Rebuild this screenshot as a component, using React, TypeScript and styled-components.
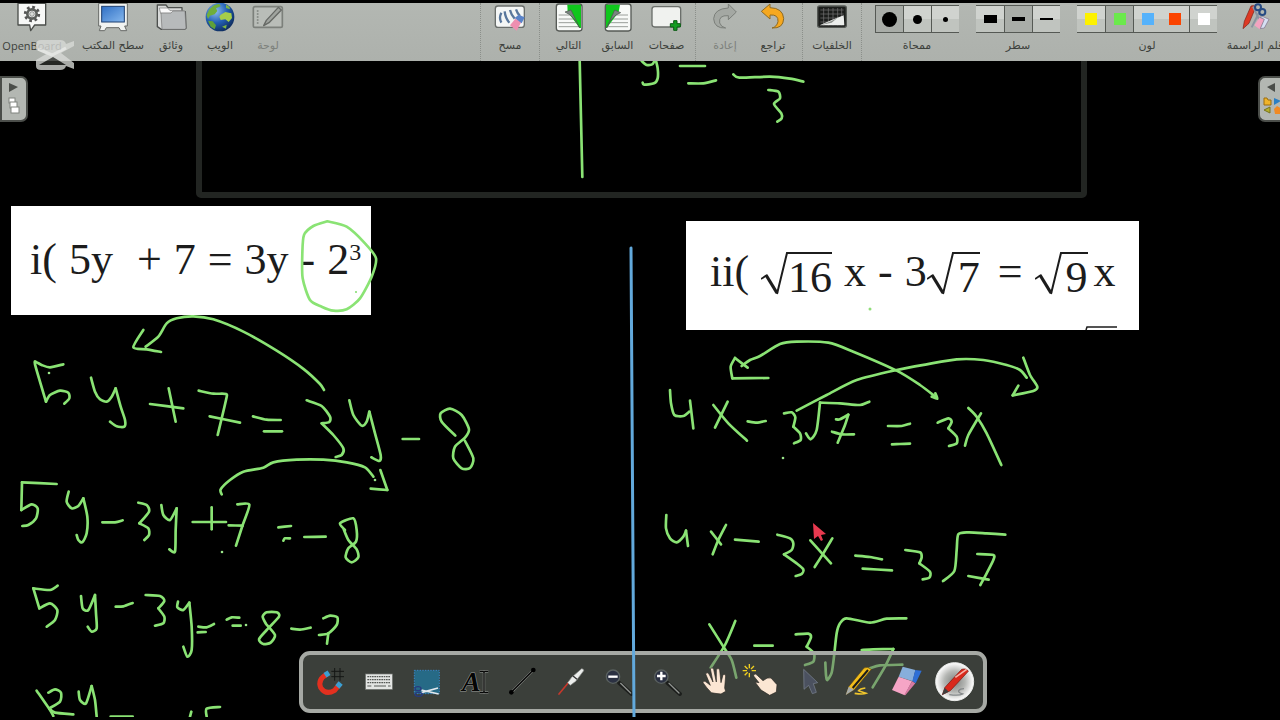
import React from 'react';
import styled, { createGlobalStyle, css } from 'styled-components';

const GlobalStyle = createGlobalStyle`
  *, *::before, *::after { box-sizing: border-box; }
  body { margin: 0; background: #000; }
  button { font: inherit; color: inherit; background: none; border: 0; padding: 0; cursor: pointer; }
`;

const Page = styled.div`
  display: grid;
  grid-template-columns: minmax(0, 1fr);
  min-height: 100vh;
  padding-bottom: 3px;
  overflow: hidden;
  background: #000;
  font-family: 'DejaVu Sans', 'Noto Sans', sans-serif;
`;

/* ---------- top toolbar ---------- */

const Toolbar = styled.header`
  grid-area: 1 / 1;
  align-self: start;
  z-index: 2;
  display: flex;
  height: 61px;
  border-top: 3px solid #000;
  background: linear-gradient(#b3b7b2, #adb1ac);
  color: #3c3f3b;
  overflow: hidden;
`;

const Section = styled.div<{ $pad?: number; $line?: boolean; $end?: boolean }>`
  display: flex;
  flex: none;
  padding: 0 ${p => p.$pad ?? 0}px;
  ${p => p.$line && css`border-left: 1px dotted #8b8f8a;`}
  ${p => p.$end && css`margin-left: auto;`}
`;

const PenSection = styled(Section)`
  padding: 0 0 0 13px;
`;

const Tool = styled.button<{ $width: number; $space?: number }>`
  flex: none;
  display: flex;
  flex-direction: column;
  align-items: center;
  gap: 3px;
  width: ${p => p.$width}px;
  margin-right: ${p => p.$space ?? 0}px;
  &:disabled { color: #7d817c; cursor: default; }
`;

const Label = styled.span<{ $latin?: boolean }>`
  font-family: ${p => (p.$latin ? "'Open Sans', 'Noto Sans'" : "'DejaVu Sans'")}, sans-serif;
  font-size: 11px;
  line-height: 20px;
  white-space: nowrap;
`;

const ToolIcon = styled.svg`
  flex: none;
  width: 32px;
  height: 30px;
  overflow: visible;
`;

const Choice = styled.div<{ $gap: number }>`
  flex: none;
  display: flex;
  flex-direction: column;
  align-items: center;
  gap: 3px;
  margin-right: ${p => p.$gap}px;
  padding-top: 2px;
`;

const Segments = styled.div`
  display: flex;
  height: 28px;
  border: solid #555954;
  border-width: 1px 0;
`;

const Segment = styled.button<{ $on?: boolean; $edge?: boolean }>`
  display: flex;
  align-items: center;
  justify-content: center;
  width: 28px;
  background: ${p => (p.$on ? '#a9ada8' : 'linear-gradient(#d0d3cf 50%, #c0c4bf 50%)')};
  ${p => p.$edge && css`border-left: 1px solid #555954;`}
`;

const Mark = styled.span<{ $w: number; $h: number; $color?: string; $round?: boolean }>`
  width: ${p => p.$w}px;
  height: ${p => p.$h}px;
  background: ${p => p.$color ?? '#000'};
  border-radius: ${p => (p.$round ? '50%' : '0')};
`;

/* ---------- board ---------- */

const Board = styled.main`
  grid-area: 1 / 1;
  position: relative;
  overflow: hidden;
`;

const Frame = styled.div`
  position: absolute;
  left: 196px;
  top: 20px;
  width: 891px;
  height: 178px;
  border: 6px solid #222522;
  border-radius: 5px;
`;

const Card = styled.section<{ $x: number; $y: number; $w: number; $pad: string }>`
  position: absolute;
  left: ${p => p.$x}px;
  top: ${p => p.$y}px;
  width: ${p => p.$w}px;
  height: 109px;
  padding: ${p => p.$pad};
  display: flex;
  align-items: flex-start;
  background: #fff;
  color: #1c1c1c;
  font: 44px/44px 'Liberation Serif', serif;
  white-space: nowrap;
`;

const Term = styled.span<{ $gap?: number }>`
  display: flex;
  align-items: flex-start;
  margin-left: ${p => p.$gap ?? 0}px;
`;

const Power = styled.sup`
  margin-top: 2px;
  font-size: 24px;
  line-height: 24px;
`;

const RootBox = styled.span<{ $gap?: number }>`
  display: flex;
  align-items: flex-start;
  margin: 2px 0 0 ${p => p.$gap ?? 0}px;
`;

const Radicand = styled.span<{ $pad?: number }>`
  padding: 2px 0 0 ${p => p.$pad ?? 0}px;
  border-top: 2px solid #1c1c1c;
`;

const RootSign = styled.svg`
  width: 27px;
  height: 43px;
`;

const InkLayer = styled.svg`
  position: absolute;
  inset: 0;
  width: 100%;
  height: 100%;
  pointer-events: none;
`;

const SideTab = styled.button<{ $side: 'left' | 'right' }>`
  position: absolute;
  top: 76px;
  ${p => p.$side}: 0;
  width: ${p => (p.$side === 'left' ? 28 : 22)}px;
  height: 46px;
  overflow: hidden;
  background: #b3b7b2;
  border: 2px solid #4b4e4a;
  border-${p => p.$side}-width: ${p => (p.$side === 'left' ? 2 : 0)}px;
  border-radius: ${p => (p.$side === 'left' ? '0 7px 7px 0' : '7px 0 0 7px')};
  svg { display: block; overflow: visible; }
`;

const PaletteDock = styled.div`
  position: absolute;
  left: 6px;
  right: 0;
  bottom: 4px;
  display: flex;
  justify-content: center;
  pointer-events: none;
`;

const Palette = styled.nav`
  display: flex;
  align-items: center;
  height: 62px;
  padding: 0 4px;
  border: 4px solid #a6a9a4;
  border-radius: 11px;
  background: rgba(108, 115, 106, 0.55);
  pointer-events: auto;
`;

const PaletteButton = styled.button`
  display: flex;
  align-items: center;
  justify-content: center;
  width: 48px;
  height: 48px;
  svg { width: 32px; height: 32px; overflow: visible; }
`;

const Watermark = styled.svg`
  grid-area: 1 / 1;
  z-index: 3;
  width: 42px;
  height: 34px;
  margin: 39px 0 0 34px;
  pointer-events: none;
`;

/* ---------- handwriting ---------- */

/** Turns "x,y x,y ..." samples of the pen into a smooth open curve. */
function smooth(samples: string): string {
  const p = samples.split(' ').map(s => s.split(',').map(Number));
  let d = `M${p[0][0]} ${p[0][1]}`;
  for (let i = 0; i < p.length - 1; i++) {
    const a = p[i - 1] ?? p[i];
    const b = p[i];
    const c = p[i + 1];
    const e = p[i + 2] ?? c;
    const k = 8;
    d += `C${b[0] + (c[0] - a[0]) / k} ${b[1] + (c[1] - a[1]) / k} ${c[0] - (e[0] - b[0]) / k} ${c[1] - (e[1] - b[1]) / k} ${c[0]} ${c[1]}`;
  }
  return d;
}

type InkGroup = { x: number; y: number; strokes: string[] };

const ink: InkGroup[] = [
  {
    x: 470, y: 0,
    strokes: [
      '329,180 337,531',
      '515,183 530,195 548,192 556,175', '556,175 563,205 563,235 552,250 522,254 518,248',
      '630,198 705,198', '655,250 700,250 738,241',
      '790,223 808,233 900,230 960,236 1000,245',
      '895,270 925,275 930,295 912,312 934,340 935,355 922,365',
    ],
  },
  {
    x: 0, y: 190,
    strokes: [
      '982,94 1040,110 1095,160 1128,205 1115,260 1080,325 1040,358 1000,362 965,350 930,330 908,265 907,190 912,135 940,108 982,94',
      '430,420 400,472 440,478 483,486',
      '437,470 475,440 500,400 530,385 580,379 640,388 730,425 830,482 912,538 960,582 972,600',
    ],
  },
  {
    x: 0, y: 340,
    strokes: [
      '190,73 150,82 125,75 110,67 105,73 138,185', '138,185 150,165 180,152 205,158 208,175 193,191',
      '273,113 285,155 300,178 320,185 335,170 347,145', '347,145 362,200 375,240 373,260 350,259 330,245',
      '450,192 550,205', '506,145 527,245',
      '596,152 640,161 678,162 678,180 653,285', '629,229 720,248',
      '759,229 800,239 842,240', '792,274 846,274',
      '920,181 965,198 990,230 988,246 965,250', '965,250 1000,285 1030,325 1025,345 1007,351',
      '1048,181 1060,225 1085,257 1100,245 1108,215', '1108,215 1125,280 1142,345 1138,363 1114,352',
      '1208,297 1257,297',
      '1366,287 1325,245 1322,220 1350,206 1385,225 1407,268 1395,293 1365,320 1360,355 1385,385 1410,384 1420,355 1395,303',
      '665,463 662,448 690,420 730,395 790,383 820,367 890,359 970,359 1040,367 1095,382 1120,410',
      '1141,390 1162,450', '1162,450 1112,446',
    ],
  },
  {
    x: 0, y: 470,
    strokes: [
      '170,42 66,37', '66,37 64,120', '64,120 95,103 113,115 108,145 85,165 67,168',
      '206,65 200,95 215,115 235,108 250,85', '250,85 262,140 260,190 247,217 235,210 230,195',
      '307,157 345,157 368,151',
      '415,98 440,105 447,125 418,160', '418,160 445,175 447,195 433,210',
      '484,105 490,135 510,150 530,115', '530,115 527,180 525,245 508,238',
      '578,156 678,156', '635,112 635,178',
      '712,103 748,104 728,165 708,227', '686,166 728,167',
      '835,172 873,168', '850,212 855,205 870,205', '913,201 977,200',
      '1035,180 1020,160 1060,145 1070,180 1068,215 1045,235 1037,262 1055,277 1075,262 1070,238 1045,210 1030,175',
      '173,347 150,360 100,355', '100,355 118,415', '118,415 150,400 172,420 165,450 140,470',
      '243,378 248,415 265,420 285,375', '285,375 288,430 290,475 275,485 263,470',
      '347,410 370,409 398,399',
      '437,375 480,378 493,393 475,415', '475,415 493,440 490,460 465,467',
      '534,395 532,412 550,420 568,398', '568,398 575,470 575,540 562,560 550,530',
      '595,470 620,472 642,462', '593,487 617,486',
      '680,449 695,442 718,443', '698,467 722,467',
      '798,462 788,440 800,427 830,427 837,440 800,480 777,508 790,522 812,518 825,495 798,462',
      '874,476 900,479 932,473',
      '970,445 990,437 1012,442 1010,465 985,490 957,495', '985,490 981,521',
      '110,662 150,720 160,738', '145,668 165,658 183,668 180,695 148,715', '148,715 165,728 220,733',
      '236,665 240,690 258,700 275,648', '275,648 285,690 290,740',
      '332,740 398,740', '574,725 570,740', '660,711 620,716 620,740',
    ],
  },
  {
    x: 640, y: 330,
    strokes: [
      '305,108 330,90 360,78 420,42 470,35 565,38 640,65 770,122 840,165 890,203', '875,200 892,206 886,190',
      '323,113 285,84', '285,84 272,110 277,145', '277,145 385,144',
      '470,242 560,195 650,150 770,120 860,103 950,88 1030,90 1100,105 1140,120 1160,143',
      '1150,83 1170,135 1192,170 1180,183 1118,196', '1118,196 1135,167',
      '90,180 93,220 103,255 130,258 148,245', '150,212 160,295',
      '220,225 265,280 321,332', '263,215 225,293',
      '323,274 350,278 377,273',
      '432,250 455,247 466,262 460,290', '460,290 480,310 482,330 462,340',
      '498,310 512,328 530,300 540,218', '540,218 600,220 660,225 688,215',
      '588,268 600,268 625,254', '625,254 615,285 593,338', '576,305 605,313 642,313',
      '744,288 785,288 810,281', '756,343 780,342 810,341',
      '893,278 925,265 935,275 925,295', '925,295 950,320 950,340 927,348',
      '985,234 1010,260 1040,310 1084,405', '1023,250 985,315 975,347',
    ],
  },
  {
    x: 640, y: 500,
    strokes: [
      '79,45 78,85 90,115 110,127 130,110 138,92', '138,92 144,138',
      '213,95 243,133', '258,75 235,120 218,163', '285,119 356,125',
      '412,104 450,115 460,130 455,150 432,163', '432,163 470,190 490,208 485,222 467,228',
      '511,121 573,190', '577,115 550,160 524,201',
      '646,167 690,171 726,178', '668,206 756,211',
      '796,150 840,157 845,172 838,190', '838,190 870,215 868,233 848,238',
      '909,243 943,213 950,150 955,103 985,97 1040,100 1096,104',
      '1012,162 1060,165 1060,180 1040,220 1021,255', '985,228 1046,239',
      '208,373 250,440 275,480 289,533', '286,363 255,435 212,503', '343,437 398,437',
      '467,403 505,401 513,412 500,440', '500,440 522,460 520,485 495,495',
      '556,488 558,525 562,540 575,518 582,470 590,400 600,370 620,355 690,368 740,356 799,355',
      '665,450 700,448 760,447', '760,447 735,500 698,562', '690,505 720,496 787,494',
    ],
  },
];

const dots = [[49, 373], [375, 480], [222, 552], [246, 625], [783, 458]];

function Handwriting() {
  return (
    <InkLayer aria-hidden="true">
      <g fill="none" stroke="#8ae374" strokeWidth="8" strokeLinecap="round" strokeLinejoin="round">
        {ink.map(g => (
          <g key={`${g.x}-${g.y}`} transform={`translate(${g.x} ${g.y}) scale(${1 / 3})`}>
            {g.strokes.map(s => <path key={s} d={smooth(s)} />)}
          </g>
        ))}
      </g>
      {dots.map(([x, y]) => <circle key={`${x}-${y}`} cx={x} cy={y} r="1.3" fill="#9be58a" />)}
      <circle cx="356" cy="292" r="1" fill="#7fdc6a" />
      <circle cx="870" cy="309" r="1.5" fill="#8fdd78" />
      <path d="M1086 330l1-3h30" fill="none" stroke="#1c1c1c" strokeWidth="1.5" />
      <path d="M813 523l1 16 4-3 3 5 2-1-2-5 5-1z" fill="#e8394f" />
    </InkLayer>
  );
}

/* ---------- equations ---------- */

function Root({ children, gap, pad }: { children: React.ReactNode; gap?: number; pad?: number }) {
  return (
    <RootBox $gap={gap}>
      <RootSign viewBox="0 0 27 43" aria-hidden="true">
        <path d="M0 27l6-4" fill="none" stroke="#1c1c1c" strokeWidth="1.8" />
        <path d="M5 23l11 18" fill="none" stroke="#1c1c1c" strokeWidth="3.2" />
        <path d="M16 42L26 1h1" fill="none" stroke="#1c1c1c" strokeWidth="2" />
      </RootSign>
      <Radicand $pad={pad}>{children}</Radicand>
    </RootBox>
  );
}

/* ---------- toolbar data ---------- */

type Item = { label: string; width: number; box: string; icon: React.ReactNode; space?: number; disabled?: boolean; latin?: boolean };

const modes: Item[] = [
  {
    label: 'OpenBoard', width: 64, space: 16, latin: true, box: '48 9 96 90',
    icon: (
      <>
        <path d="M54 10h83v65h-33l-12 17-3-17H54z" fill="#f7f8f7" stroke="#4b4e4b" strokeWidth="4" strokeLinejoin="round" />
        <circle cx="96" cy="42" r="20" fill="none" stroke="#555" strokeWidth="9" strokeDasharray="8 7.7" />
        <circle cx="96" cy="42" r="14" fill="none" stroke="#5c5f5c" strokeWidth="8" />
        <circle cx="96" cy="42" r="7" fill="#d9dcd9" stroke="#666" strokeWidth="2" />
      </>
    ),
  },
  {
    label: 'سطح المكتب', width: 66, box: '291 9 96 90',
    icon: (
      <>
        <defs><linearGradient id="screen" x1="0" y1="0" x2="1" y2="1"><stop offset="0" stopColor="#2f6fc4" /><stop offset="1" stopColor="#86b8ee" /></linearGradient></defs>
        <path d="M296 10h86v68h-8l6 14h-18l-5-9h-38l-5 9h-16l5-14h-7z" fill="#f1f3f1" stroke="#666966" strokeWidth="3" strokeLinejoin="round" />
        <rect x="305" y="19" width="68" height="47" fill="url(#screen)" stroke="#1d3f70" strokeWidth="3" />
      </>
    ),
  },
  {
    label: 'وثائق', width: 50, box: '465 9 96 90',
    icon: (
      <>
        <path d="M472 15h26l6 8h42v12h10l2 50-4 3h-70l-12-8z" fill="#d8dad9" stroke="#4d504e" strokeWidth="4" strokeLinejoin="round" />
        <path d="M478 24h25l7 8h40v8h-68z" fill="#fafafa" stroke="#777" strokeWidth="2" />
        <path d="M483 39h30l6-6h36l3 52-4 3h-68z" fill="#b7babb" stroke="#777" strokeWidth="2" />
      </>
    ),
  },
  {
    label: 'الويب', width: 48, box: '610 9 96 90',
    icon: (
      <>
        <defs><radialGradient id="globe" cx=".35" cy=".3" r=".8"><stop offset="0" stopColor="#8fbdf0" /><stop offset=".5" stopColor="#2360b4" /><stop offset="1" stopColor="#0b2450" /></radialGradient></defs>
        <circle cx="658" cy="51" r="43" fill="url(#globe)" />
        <path d="M626 28l14-12 16-5 4 8-14 6 4 8-8 10-14 4-6 10-4-12z" fill="#6fae3c" />
        <path d="M660 44l14-8 18 4 2 14-10 12-10-8-14 2-4-10z" fill="#a6cd4a" />
        <path d="M622 62l14 2 10 12-4 12-12-8z" fill="#5fa03a" />
        <path d="M676 14l10 6 2 8-12-4zM664 80l14-6-2 12z" fill="#7db544" />
      </>
    ),
  },
  {
    label: 'لوحة', width: 48, disabled: true, box: '755 9 96 90',
    icon: (
      <>
        <rect x="759" y="20" width="87" height="62" rx="5" fill="#b9bdb8" stroke="#7c807b" strokeWidth="5" />
        <path d="M772 30v42" stroke="#8b8f8a" strokeWidth="5" strokeDasharray="6 3" />
        <path d="M790 77l8-16 36-39 9 8-37 38z" fill="#a0a49f" stroke="#666965" strokeWidth="4" strokeLinejoin="round" />
      </>
    ),
  },
];

const pageEdge = (x: number) => <rect x={x} y="12" width="77" height="81" rx="8" fill="#f7f9f7" stroke="#565a56" strokeWidth="4" />;

const actions: { pad: number; items: Item[] }[] = [
  {
    pad: 0,
    items: [{
      label: 'مسح', width: 58, box: '70 9 96 90',
      icon: (
        <>
          <rect x="74" y="18" width="87" height="64" rx="8" fill="#f4f6f5" stroke="#6a6e6b" strokeWidth="4" />
          <path d="M92 38q-8 16 0 30M102 34q2 20 14 34M118 30q4 16 14 26M136 28q4 12 12 20" stroke="#59779c" strokeWidth="7" fill="none" />
          <path d="M118 76l16-20 18 10-14 26z" fill="#ee8fb0" /><path d="M132 54l12-10 18 8-9 18z" fill="#5a83c8" />
        </>
      ),
    }],
  },
  {
    pad: 4,
    items: [
      {
        label: 'التالي', width: 49, box: '247 9 96 90',
        icon: (
          <>
            {pageEdge(257)}
            <path d="M264 45h62M264 57h62M264 68h62M264 80h62" stroke="#6d716d" strokeWidth="2" />
            <path d="M290 14h41v70h-4l-36-48z" fill="#0fc61c" /><path d="M283 36l18-6 26 54q-16-36-44-48z" fill="#7a8480" stroke="#4d534f" strokeWidth="2" />
          </>
        ),
      },
      {
        label: 'السابق', width: 49, box: '392 9 96 90',
        icon: (
          <>
            {pageEdge(402)}
            <path d="M408 45h62M408 57h62M408 68h62M408 80h62" stroke="#6d716d" strokeWidth="2" />
            <path d="M446 14h-42v70h2l36-48z" fill="#0fc61c" /><path d="M448 38l-18-8-24 54q14-36 42-46z" fill="#7a8480" stroke="#4d534f" strokeWidth="2" />
          </>
        ),
      },
      {
        label: 'صفحات', width: 49, box: '537 9 96 90',
        icon: (
          <>
            <rect x="540" y="20" width="86" height="61" rx="8" fill="#f0f2ef" stroke="#6b6f6b" strokeWidth="4" />
            <path d="M605 62h10v9h10v10h-10v10h-10V81h-10V71h10z" fill="#149c22" stroke="#0b5d14" strokeWidth="3" strokeLinejoin="round" />
          </>
        ),
      },
    ],
  },
  {
    pad: 5,
    items: [
      {
        label: 'إعادة', width: 48, disabled: true, box: '710 9 96 90',
        icon: <path d="M768 12l24 24-24 23V47q-30-2-26 22 4 12 18 15-34 2-36-28 2-30 44-32z" fill="#a4a8a3" stroke="#7b7f7a" strokeWidth="3" strokeLinejoin="round" />,
      },
      {
        label: 'تراجع', width: 48, box: '857 9 96 90',
        icon: <path d="M896 12l-26 22 26 23V45q26-2 24 20-4 16-18 19 34 2 35-28-2-32-41-33z" fill="#f6a81f" stroke="#8d6a24" strokeWidth="3" strokeLinejoin="round" />,
      },
    ],
  },
  {
    pad: 0,
    items: [{
      label: 'الخلفيات', width: 58, box: '1035 9 96 90',
      icon: (
        <>
          <rect x="1040" y="18" width="86" height="64" rx="6" fill="#1b1d1b" stroke="#555955" strokeWidth="4" />
          <path d="M1048 30h70M1048 42h70M1048 54h70M1048 66h70M1058 24v52M1072 24v52M1086 24v52M1100 24v52M1112 24v52" stroke="#777" strokeWidth="2" />
          <path d="M1046 76h74l-2-30-36 14z" fill="#eceeec" /><path d="M1046 76q40-12 60-28l-24 20z" fill="#8d918d" />
        </>
      ),
    }],
  },
];

function ToolButton({ item }: { item: Item }) {
  return (
    <Tool type="button" $width={item.width} $space={item.space} disabled={item.disabled}>
      <ToolIcon viewBox={item.box} aria-hidden="true">{item.icon}</ToolIcon>
      <Label $latin={item.latin}>{item.label}</Label>
    </Tool>
  );
}

const colours = ['#fdf100', '#6be94c', '#55b2fb', '#fb4400', '#ffffff'];

/* ---------- palette ---------- */

const lens = (x: number, plus: boolean) => (
  <>
    <path d={`M${x + 18} 128l38 34`} stroke="#1c1e1c" strokeWidth="12" strokeLinecap="round" />
    <path d={`M${x + 23} 130l30 29`} stroke="#8f938f" strokeWidth="4" strokeLinecap="round" />
    <circle cx={x} cy="110" r="20" fill="#2b3142" stroke="#59605f" strokeWidth="4" />
    <path d={plus ? `M${x - 13} 108h26M${x} 95v26` : `M${x - 14} 110h28`} stroke="#fff" strokeWidth="7" />
  </>
);

const paletteTools: { name: string; box: string; icon: React.ReactNode }[] = [
  {
    name: 'Snap', box: '75 78 96 96',
    icon: (
      <>
        <path d="M134 84v38M150 84v38M124 94h38M124 110h38" stroke="#151715" strokeWidth="3" />
        <path d="M112 102Q82 118 92 143q16 24 42 8l16-20" fill="none" stroke="#e3301f" strokeWidth="15" />
        <path d="M105 106l12-8M142 141l10-12" stroke="#3a9fd2" strokeWidth="16" />
      </>
    ),
  },
  {
    name: 'Keyboard', box: '217 78 96 96',
    icon: (
      <>
        <rect x="225" y="102" width="80" height="46" fill="#e3e5e3" stroke="#777b77" strokeWidth="2" />
        <path d="M230 110h70M230 119h70M230 128h70" stroke="#555955" strokeWidth="4" strokeDasharray="5 2" />
        <path d="M230 138h12M250 138h36M292 138h8" stroke="#555955" strokeWidth="3" />
      </>
    ),
  },
  {
    name: 'Capture', box: '363 78 96 96',
    icon: (
      <>
        <rect x="373" y="91" width="75" height="70" fill="#266a86" stroke="#3a86c8" strokeWidth="3" strokeDasharray="4 4" />
        <path d="M394 158l50-14M394 150l52 12" stroke="#e2e8ee" strokeWidth="5" />
        <ellipse cx="384" cy="146" rx="9" ry="6" fill="none" stroke="#273a80" strokeWidth="4" /><ellipse cx="386" cy="163" rx="11" ry="6" fill="none" stroke="#273a80" strokeWidth="4" />
      </>
    ),
  },
  {
    name: 'Text', box: '507 78 96 96',
    icon: (
      <>
        <text x="516" y="154" fontFamily="Liberation Serif, serif" fontStyle="italic" fontWeight="700" fontSize="84" fill="#050505" stroke="#9a9d99" strokeWidth="3" paintOrder="stroke">A</text>
        <path d="M569 94h10l3 3 3-3h10M569 158h10l3-3 3 3h10M582 97v58" fill="none" stroke="#9a9d99" strokeWidth="7" />
        <path d="M569 94h10l3 3 3-3h10M569 158h10l3-3 3 3h10M582 97v58" fill="none" stroke="#050505" strokeWidth="4" />
      </>
    ),
  },
  {
    name: 'Line', box: '650 78 96 96',
    icon: (
      <>
        <path d="M663 157l66-67" stroke="#8d908c" strokeWidth="7" />
        <path d="M663 157l66-67" stroke="#000" strokeWidth="4" />
        <circle cx="663" cy="157" r="7" /><circle cx="729" cy="90" r="7" />
      </>
    ),
  },
  {
    name: 'Laser pointer', box: '794 78 96 96',
    icon: (
      <>
        <path d="M806 162l28-34" stroke="#c4382c" strokeWidth="5" strokeLinecap="round" />
        <path d="M832 128l12-16 30-26q6 0 6 6l-24 32-16 12z" fill="#eceeec" stroke="#8b8e8b" strokeWidth="2" />
        <path d="M848 108l12 10" stroke="#333" strokeWidth="4" />
      </>
    ),
  },
  { name: 'Zoom out', box: '938 78 96 96', icon: lens(968, false) },
  { name: 'Zoom in', box: '33 78 96 96', icon: lens(64, true) },
  {
    name: 'Hand', box: '177 78 96 96',
    icon: (
      <path d="M214 158q-14-14-25-30 2-8 12 0l10 8-14-34q4-8 10 0l12 24-8-40q6-6 10 2l8 38v-38q7-6 10 2l4 38 6-24q7-4 8 4l-3 36 3 10-14 8-18-2z" fill="#fbe6d3" stroke="#2a2723" strokeWidth="2" strokeLinejoin="round" />
    ),
  },
  {
    name: 'Interact', box: '321 78 96 96',
    icon: (
      <>
        <path d="M328 72v13M328 99v13M308 92h13M335 92h13M314 78l9 9M342 78l-9 9M314 106l9-9" stroke="#f1d020" strokeWidth="4" />
        <path d="M341 104q6-5 12 3l16 15q14-12 24-8l18 20-2 22-20 10-26-16-18-24 12 2-16-20z" fill="#fbe6d3" stroke="#2a2723" strokeWidth="2" strokeLinejoin="round" />
      </>
    ),
  },
  {
    name: 'Select', box: '465 78 96 96',
    icon: <path d="M491 88l42 40-13 3 9 26-12 4-11-25-14 12z" fill="#4b515f" stroke="#7d8694" strokeWidth="2" />,
  },
  {
    name: 'Highlighter', box: '609 78 96 96',
    icon: (
      <>
        <path d="M644 160q24 4 34 0-16-6-22-8 4-6 20-8" fill="none" stroke="#efc52d" strokeWidth="5" />
        <path d="M618 164l8-24 46-56q10-6 22 4l-50 60z" fill="#f2bd1a" stroke="#5a4716" strokeWidth="2" />
        <path d="M638 144l46-54" stroke="#1b1b1b" strokeWidth="6" />
        <path d="M617 165l9-25 16 9z" fill="#a7abaa" />
      </>
    ),
  },
  {
    name: 'Eraser', box: '753 78 96 96',
    icon: (
      <>
        <path d="M788 80l38 10-8 34-42-14z" fill="#87aedb" /><path d="M826 90l19 2-18 38-10-6z" fill="#2f6fd6" />
        <path d="M776 110l40 14-22 42-38-16z" fill="#f6a5c6" /><path d="M816 124l10 6-30 36-3-2z" fill="#d77aa2" />
      </>
    ),
  },
  {
    name: 'Pen', box: '895 78 96 96',
    icon: (
      <>
        <defs><radialGradient id="knob"><stop offset="0" stopColor="#7f827f" /><stop offset=".55" stopColor="#b5b7b4" /><stop offset="1" stopColor="#fff" /></radialGradient></defs>
        <circle cx="942" cy="125" r="57" fill="url(#knob)" stroke="#e9ebe9" strokeWidth="3" />
        <path d="M926 164q30 4 40-2-14-4-12-10 4-6 16-6" fill="none" stroke="#85898a" strokeWidth="4" />
        <path d="M905 164l8-22 50-54q16-4 20 6l-54 58z" fill="#d9291c" stroke="#7a1710" strokeWidth="2" />
        <path d="M944 112l34-24" stroke="#f7b3a8" strokeWidth="5" />
        <path d="M904 165l8-22 12 12z" fill="#3e3f3f" />
      </>
    ),
  },
];

export default function App() {
  return (
    <Page>
      <GlobalStyle />
      <Toolbar>
        <Section>{modes.map(m => <ToolButton key={m.label} item={m} />)}</Section>
        {actions.map((group, i) => (
          <Section key={i} $line $pad={group.pad} $end={i === 0}>
            {group.items.map(item => <ToolButton key={item.label} item={item} />)}
          </Section>
        ))}
        <PenSection $line>
          <Choice $gap={17}>
            <Segments role="group" aria-label="ممحاة">
              {[15, 9, 5].map((size, i) => (
                <Segment key={size} type="button" $on={i === 0} $edge><Mark $w={size} $h={size} $round /></Segment>
              ))}
            </Segments>
            <Label>ممحاة</Label>
          </Choice>
          <Choice $gap={17}>
            <Segments role="group" aria-label="سطر">
              {[8, 4, 2].map((size, i) => (
                <Segment key={size} type="button" $on={i === 1} $edge={i > 0}><Mark $w={13} $h={size} /></Segment>
              ))}
            </Segments>
            <Label>سطر</Label>
          </Choice>
          <Choice $gap={10}>
            <Segments role="group" aria-label="لون">
              {colours.map((c, i) => (
                <Segment key={c} type="button" $on={i === 1} $edge={i > 0 && i !== 3}><Mark $w={12} $h={12} $color={c} /></Segment>
              ))}
            </Segments>
            <Label>لون</Label>
          </Choice>
          <Tool type="button" $width={56} $space={-3}>
            <ToolIcon viewBox="1136 9 96 90" aria-hidden="true">
              <path d="M1148 86l4-22 20-46q10-4 14 4l-20 48z" fill="#dd3a24" stroke="#7b2015" strokeWidth="2" />
              <path d="M1178 20l20 42M1204 22l-30 60" stroke="#8a93a0" strokeWidth="6" />
              <circle cx="1193" cy="22" r="9" fill="none" stroke="#274a83" strokeWidth="6" /><circle cx="1206" cy="36" r="9" fill="none" stroke="#274a83" strokeWidth="6" />
              <path d="M1182 76l16-24 14 6-14 30z" fill="#f3a3c0" /><path d="M1198 52l10-2 18 8-14 26-12 2 12-28z" fill="#d6e0f3" stroke="#7d6b86" strokeWidth="2" />
            </ToolIcon>
            <Label>قلم الراسمة</Label>
          </Tool>
        </PenSection>
      </Toolbar>

      <Board>
        <Frame />
        <Card $x={11} $y={206} $w={360} $pad="32px 0 0 19px">
          <Term>i(</Term>
          <Term $gap={12}>5y</Term>
          <Term $gap={24}>+</Term>
          <Term $gap={12}>7</Term>
          <Term $gap={12}>=</Term>
          <Term $gap={12}>3y</Term>
          <Term $gap={12}>-</Term>
          <Term $gap={12}>2<Power>3</Power></Term>
        </Card>
        <Card $x={686} $y={221} $w={453} $pad="29px 0 0 24px">
          <Term>ii(</Term>
          <Root gap={12}>16</Root>
          <Term $gap={12}>x</Term>
          <Term $gap={12}>-</Term>
          <Term $gap={12}>3</Term>
          <Root pad={4}>7</Root>
          <Term $gap={18}>=</Term>
          <Root gap={12} pad={4}>9</Root>
          <Term $gap={6}>x</Term>
        </Card>
        <Handwriting />

        <SideTab type="button" $side="left" aria-label="Pages">
          <svg width="24" height="42" aria-hidden="true">
            <path d="M7 5l9 4-9 5z" fill="#4a4d49" />
            <g fill="#fff" stroke="#80847f"><rect x="7" y="20" width="6" height="5" /><rect x="8" y="24" width="7" height="6" /><rect x="9" y="29" width="8" height="6" /></g>
          </svg>
        </SideTab>
        <SideTab type="button" $side="right" aria-label="Library">
          <svg width="24" height="42" aria-hidden="true">
            <path d="M15 5l-8 4 8 5z" fill="#4a4d49" />
            <path d="M4 20h3l1 2h3v5H4z" fill="#f0b429" stroke="#9a6d10" />
            <path d="M14 20l7 3-7 4z" fill="#2b7fc4" />
            <path d="M10 29v6l-6-3z" fill="#b6b02c" stroke="#77731c" />
            <path d="M17 28l5 3-1 5h-6l-1-5z" fill="#f08a24" />
          </svg>
        </SideTab>

        <PaletteDock>
          <Palette>
            {paletteTools.map(t => (
              <PaletteButton key={t.name} type="button" aria-label={t.name}>
                <svg viewBox={t.box} aria-hidden="true">{t.icon}</svg>
              </PaletteButton>
            ))}
          </Palette>
        </PaletteDock>
        <InkLayer aria-hidden="true">
          <path d="M631 248L634 717" stroke="#62a9dc" strokeWidth="3" strokeLinecap="round" />
        </InkLayer>
      </Board>

      <Watermark viewBox="0 0 42 34" aria-hidden="true">
        <g opacity=".78">
          <path d="M2 6q0-5 5-5h19q5 0 6 4l8-3v5L27 14l13 10v6l-8-3q-1 4-6 4H7q-5 0-5-4v-6l12-7L2 10z" fill="#d9dbd8" />
          <path d="M5 26l14-8 13 8z" fill="#30322f" />
          <path d="M4 10l14 6 14-7" fill="none" stroke="#f3f4f2" strokeWidth="3" />
        </g>
      </Watermark>
    </Page>
  );
}
